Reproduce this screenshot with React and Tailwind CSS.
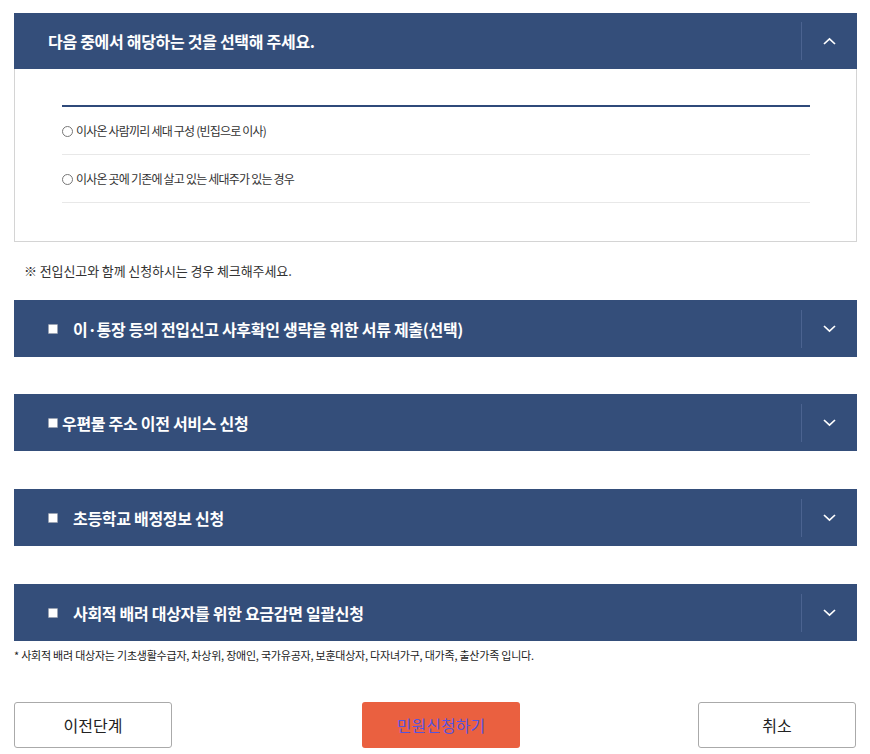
import React from "react";

const font = { fontFamily: '"Noto Sans CJK KR", "Noto Sans", sans-serif' };

const Chevron = ({ up }) => (
  <svg width="13" height="8" viewBox="0 0 13 8" fill="none">
    <path
      d={up ? "M1 7 L6.5 1.8 L12 7" : "M1 1 L6.5 6.2 L12 1"}
      stroke="#ffffff"
      strokeWidth="1.7"
    />
  </svg>
);

const Box = () => (
  <span className="inline-block w-[10px] h-[10px] bg-white border border-[#9aa3b3] rounded-[1px] shrink-0"></span>
);

const Bar = ({ title, checkbox, gap, up, className = "" }) => (
  <div className={`h-[57px] bg-[#344e7a] flex items-center ${className}`}>
    <div className="flex-1 flex items-center pl-[34px]">
      {checkbox && <Box />}
      <span
        className={`${gap} text-white text-[16px] font-bold tracking-[-0.3px]`}
      >
        {title}
      </span>
    </div>
    <div className="h-[38px] w-px bg-[#4b6390]"></div>
    <div className="w-[55px] flex items-center justify-center">
      <Chevron up={up} />
    </div>
  </div>
);

const options = [
  "이사온 사람끼리 세대 구성 (빈집으로 이사)",
  "이사온 곳에 기존에 살고 있는 세대주가 있는 경우",
];

const App = () => {
  return (
    <div className="min-h-screen bg-white" style={font}>
      <div className="ml-[14px] w-[843px] pt-[13px]">
        {/* Household type */}
        <div className="h-[56px] bg-[#344e7a] flex items-center">
          <div className="flex-1 pl-[34px] text-white text-[16px] font-bold tracking-[-0.3px]">
            다음 중에서 해당하는 것을 선택해 주세요.
          </div>
          <div className="h-[38px] w-px bg-[#4b6390]"></div>
          <div className="w-[55px] flex items-center justify-center">
            <Chevron up />
          </div>
        </div>
        <div className="border border-t-0 border-[#d4d4d4] pt-[36px] pb-[38px] pl-[47px] pr-[46px]">
          <div className="border-t-2 border-[#2f4a7a]">
            {options.map((o) => (
              <label
                key={o}
                className="h-[48px] flex items-center border-b border-[#e8e8e8] text-[12px] text-[#333] tracking-[-0.8px]"
              >
                <span className="inline-block w-[11px] h-[11px] rounded-full border border-[#777] mr-[3px] mt-px"></span>
                {o}
              </label>
            ))}
          </div>
        </div>

        <p className="mt-[20px] ml-[10px] text-[13px] text-[#333] tracking-[-0.1px] leading-[18px]">
          ※ 전입신고와 함께 신청하시는 경우 체크해주세요.
        </p>

        <Bar
          className="mt-[20px]"
          checkbox
          gap="ml-[15px]"
          title="이·통장 등의 전입신고 사후확인 생략을 위한 서류 제출(선택)"
        />
        <Bar
          className="mt-[37px]"
          checkbox
          gap="ml-[4px]"
          title="우편물 주소 이전 서비스 신청"
        />
        <Bar
          className="mt-[38px]"
          checkbox
          gap="ml-[15px]"
          title="초등학교 배정정보 신청"
        />
        <Bar
          className="mt-[38px]"
          checkbox
          gap="ml-[15px]"
          title="사회적 배려 대상자를 위한 요금감면 일괄신청"
        />

        <p className="mt-[7px] text-[11px] text-[#222] tracking-[-0.22px] leading-[14px]">
          * 사회적 배려 대상자는 기초생활수급자, 차상위, 장애인, 국가유공자, 보훈대상자, 다자녀가구, 대가족, 출산가족 입니다.
        </p>

        {/* Actions */}
        <div className="mt-[40px] mr-px flex items-center">
          <button className="w-[158px] h-[46px] border border-[#aaaaaa] rounded-[3px] bg-white text-[16px] text-[#222]">
            이전단계
          </button>
          <button className="ml-[190px] w-[158px] h-[46px] rounded-[3px] bg-[#ea6040] text-[16px] text-[#5653df]">
            민원신청하기
          </button>
          <button className="ml-auto w-[158px] h-[46px] border border-[#aaaaaa] rounded-[3px] bg-white text-[16px] text-[#222]">
            취소
          </button>
        </div>
      </div>
    </div>
  );
};

export default App;
